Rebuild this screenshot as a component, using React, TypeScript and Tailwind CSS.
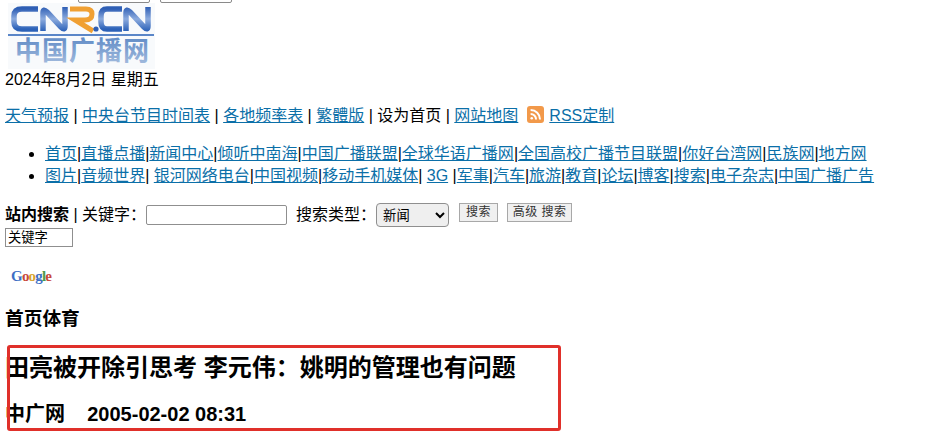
const linkCls = "text-[#0b6fa8] underline";

function A({ children }: { children: React.ReactNode }) {
  return <a href="#" className={linkCls}>{children}</a>;
}

function Logo() {
  return (
    <svg width="147" height="66" viewBox="0 0 147 66" className="block">
      <defs>
        <linearGradient id="blue" x1="0" y1="0" x2="0" y2="1">
          <stop offset="0" stopColor="#2f5fb5" />
          <stop offset="0.5" stopColor="#8cabde" />
          <stop offset="1" stopColor="#2c62b8" />
        </linearGradient>
        <linearGradient id="pale" x1="0" y1="0" x2="0" y2="1">
          <stop offset="0" stopColor="#4f7fc0" />
          <stop offset="1" stopColor="#a9c0e0" />
        </linearGradient>
      </defs>
      <rect x="0" y="0" width="147" height="66" fill="#f8fafc" />
      <path d="M30 6H14Q6 6 6 13V19Q6 26 14 26H30" fill="none" stroke="url(#blue)" strokeWidth="5.5" />
      <path d="M35 28V10Q35 5 39 9L53 24Q57 28 57 23V4" fill="none" stroke="url(#blue)" strokeWidth="5.5" />
      <path d="M62 6H78Q84 6 84 11Q84 17 77 17H67L85 28" fill="none" stroke="#f0a033" strokeWidth="5" />
      <circle cx="88" cy="26" r="2.6" fill="#2f5fb5" />
      <path d="M114 6H99Q93 6 93 13V19Q93 26 99 26H114" fill="none" stroke="url(#blue)" strokeWidth="5.5" />
      <path d="M118 28V10Q118 5 122 9L136 24Q140 28 140 23V4" fill="none" stroke="url(#blue)" strokeWidth="5.5" />
      <rect x="0" y="31" width="146" height="2" fill="#5a86c8" />
      <text x="74" y="57" textAnchor="middle" fontSize="26" fontWeight="700" fontFamily="'Noto Sans CJK SC', sans-serif" fill="url(#pale)" textLength="134">中国广播网</text>
    </svg>
  );
}

function GoogleLogo() {
  return (
    <span className="block font-['Liberation_Serif',serif] text-[15px] font-bold leading-[20px] tracking-[-0.8px]">
      <span className="text-[#3d6fc4]">G</span>
      <span className="text-[#c9483b]">o</span>
      <span className="text-[#d8a52e]">o</span>
      <span className="text-[#3d6fc4]">g</span>
      <span className="text-[#4f9a4a]">l</span>
      <span className="text-[#c9483b]">e</span>
    </span>
  );
}

const row1 = ["首页", "直播点播", "新闻中心", "倾听中南海", "中国广播联盟", "全球华语广播网", "全国高校广播节目联盟", "你好台湾网", "民族网", "地方网"];
const row2a = ["图片", "音频世界"];
const row2b = ["银河网络电台", "中国视频", "移动手机媒体"];
const row2c = ["军事", "汽车", "旅游", "教育", "论坛", "博客", "搜索", "电子杂志", "中国广播广告"];

function Row({ items }: { items: string[] }) {
  return (
    <>
      {items.map((t, i) => (
        <span key={t}>
          {i > 0 && "|"}
          <A>{t}</A>
        </span>
      ))}
    </>
  );
}

export default function App() {
  return (
    <div className="relative h-[439px] overflow-hidden bg-white font-['Liberation_Sans','Noto_Sans_CJK_SC',sans-serif] text-[16px] leading-[22px] text-black">
      <div className="flex h-[3px] items-end gap-[10px] pl-[78px]">
        <div className="h-[20px] w-[72px] shrink-0 rounded-[2px] border border-[#8a8a8a]" />
        <div className="h-[20px] w-[72px] shrink-0 rounded-[2px] border border-[#8a8a8a]" />
      </div>
      <div className="pl-[5px]">
        <div className="pl-[3px]"><Logo /></div>
        <p className="h-[22px]">2024年8月2日 星期五</p>
        <p className="mt-[14px] flex h-[22px] items-center whitespace-pre">
          <A>天气预报</A> | <A>中央台节目时间表</A> | <A>各地频率表</A> | <A>繁體版</A> | 设为首页 | <A>网站地图</A>
          <span className="mb-[4px] ml-[9px] mr-[5px] flex h-[17px] w-[17px] items-center justify-center rounded-[3px] bg-[#f2994a]">
            <svg width="13" height="13" viewBox="0 0 12 12" fill="none" stroke="#fff" strokeWidth="1.8">
              <circle cx="2.5" cy="9.5" r="1.2" fill="#fff" stroke="none" />
              <path d="M1.5 5.5a5 5 0 0 1 5 5" />
              <path d="M1.5 1.8a8.7 8.7 0 0 1 8.7 8.7" />
            </svg>
          </span>
          <A>RSS定制</A>
        </p>
        <ul className="mt-[16px] list-disc whitespace-nowrap pl-[40px]">
          <li><Row items={row1} /></li>
          <li>
            <Row items={row2a} />|<span> </span>
            <Row items={row2b} />|<span> </span><A>3G</A><span> </span>|<Row items={row2c} />
          </li>
        </ul>
        <div className="mt-[14px] flex h-[28px] items-center whitespace-pre">
          <b>站内搜索</b> | 关键字：
          <input className="h-[20px] w-[141px] rounded-[2px] border border-[#8f8f8f] bg-white" />
          <span className="ml-[9px]">搜索类型：</span>
          <select className="h-[24px] w-[73px] rounded-[4px] border border-[#8f8f8f] bg-[#efefef] pl-[2px] text-[13.3px]">
            <option>新闻</option>
          </select>
          <button className="mb-[6px] ml-[10px] h-[19px] w-[39px] border border-[#a8a8a8] bg-[#f0f0f0] text-[12px] leading-[16px] tracking-[0.5px] text-[#333]">搜索</button>
          <button className="mb-[6px] ml-[9px] h-[19px] w-[65px] border border-[#a8a8a8] bg-[#f0f0f0] text-[12px] leading-[16px] tracking-[0.5px] text-[#333]">高级 搜索</button>
        </div>
        <div className="-mt-[1px] h-[19px] w-[68px] border border-[#8f8f8f] pl-[2px] text-[13.3px] leading-[17px]">关键字</div>
        <div className="mt-[19px] pl-[6px]"><GoogleLogo /></div>
        <h3 className="mt-[20px] text-[18.72px] font-bold leading-[26px]">首页体育</h3>
        <h1 className="mt-[20px] text-[24px] font-bold leading-[32px]">田亮被开除引思考 李元伟：姚明的管理也有问题</h1>
        <h2 className="mt-[17px] whitespace-pre text-[20px] font-bold leading-[26px]">中广网    2005-02-02 08:31</h2>
      </div>
      <div className="absolute left-[7px] top-[345px] h-[86px] w-[554px] rounded-[3px] border-[3px] border-[#e0302a]" />
    </div>
  );
}
